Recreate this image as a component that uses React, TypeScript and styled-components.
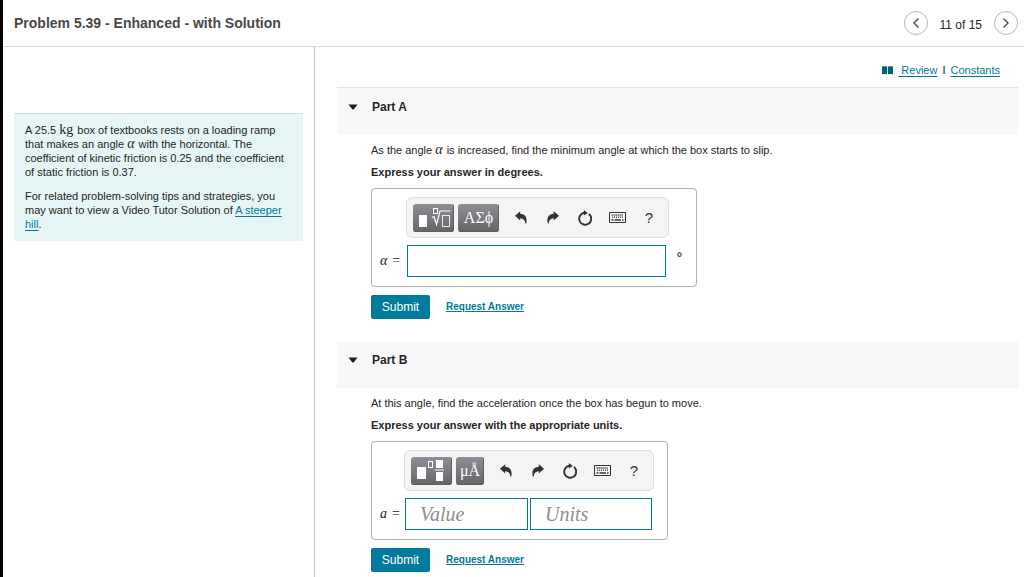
import React from "react";
import styled, { createGlobalStyle } from "styled-components";

const sans = '"Liberation Sans", Arial, Helvetica, sans-serif';
const serif = '"Liberation Serif", "Times New Roman", serif';
const teal = "#007b9c";

const GlobalStyle = createGlobalStyle`
  *, *::before, *::after { box-sizing: border-box; }
  body { margin: 0; background: #fff; color: #252525; font: 11px/14px ${sans}; }
  p, h1, h2 { margin: 0; }
  button, input { font: inherit; color: inherit; padding: 0; margin: 0; }
  button { cursor: pointer; }
  svg { display: block; }
`;

const Page = styled.div`
  min-height: 100vh;
  display: flex;
  flex-direction: column;
  border-left: 3px solid #000;
`;

const Header = styled.header`
  display: flex;
  align-items: center;
  justify-content: space-between;
  height: 47px;
  padding: 0 6px 0 11px;
  border-bottom: 1px solid #dcdcdc;
`;

const Title = styled.h1`
  font-size: 14px;
  line-height: 16px;
  color: #484848;
`;

const Pager = styled.nav`
  display: flex;
  align-items: center;
  gap: 12px;
  font-size: 12px;
`;

const PagerLabel = styled.span`
  padding-top: 4px;
`;

const RoundButton = styled.button`
  display: grid;
  place-items: center;
  width: 24px;
  height: 24px;
  border: 1px solid #b8b8b8;
  border-radius: 50%;
  background: #fff;
`;

const Body = styled.div`
  flex: 1;
  display: flex;
`;

const Sidebar = styled.aside`
  flex: none;
  width: 312px;
  padding: 66px 11px 0;
  border-right: 1px solid #b9c8d6;
`;

const ProblemCard = styled.section`
  display: flex;
  flex-direction: column;
  gap: 10px;
  padding: 9px 11px 10px;
  border-top: 1px solid #d5dddd;
  background: #e6f6f6;
`;

const TextLink = styled.a`
  color: ${teal};
  text-decoration: underline;
  text-underline-offset: 2px;
  text-decoration-thickness: 1px;
`;

const RequestLink = styled(TextLink)`
  font-size: 10px;
  font-weight: bold;
  text-underline-offset: 1px;
`;

const MathText = styled.span<{ $italic?: boolean }>`
  margin-right: 1px;
  font-family: ${serif};
  font-size: 14px;
  line-height: 1px;
  font-style: ${(p) => (p.$italic ? "italic" : "normal")};
`;

const Main = styled.main`
  flex: 1;
  min-width: 0;
  padding: 0 6px 4px 22px;
`;

const Resources = styled.div`
  display: flex;
  align-items: center;
  justify-content: flex-end;
  gap: 5px;
  padding: 16px 18px 10px 0;

  a { white-space: pre; }
`;

const Parts = styled.div`
  display: flex;
  flex-direction: column;
  gap: 22px;
  border-top: 1px solid #e4e4e4;
`;

const PartHeader = styled.h2`
  display: flex;
  height: 47px;
  background: #f8f8f8;
  font-size: 12px;
`;

const PartToggle = styled.button`
  display: flex;
  align-items: center;
  gap: 14px;
  height: 38px;
  padding: 0 11px;
  border: 0;
  background: none;
  font-weight: bold;
`;

const PartBody = styled.div`
  padding: 8px 34px 0;
`;

const Prompt = styled.p<{ $strong?: boolean }>`
  line-height: 15px;
  margin-bottom: ${(p) => (p.$strong ? 8 : 7)}px;
  font-weight: ${(p) => (p.$strong ? "bold" : "normal")};
`;

const AnswerBox = styled.div<{ $label: number }>`
  display: grid;
  grid-template-columns: ${(p) => p.$label}px auto;
  row-gap: 7px;
  width: fit-content;
  padding: 8px 13px 9px 8px;
  border: 1px solid #b0b0b0;
  border-radius: 4px;
`;

const Toolbar = styled.div`
  grid-column: 2;
  justify-self: start;
  display: flex;
  align-items: center;
  gap: 6px;
  height: 41px;
  padding: 0 3px 0 6px;
  border: 1px solid #dedede;
  border-radius: 6px;
  background: #f4f4f4;
`;

const Palettes = styled.div`
  display: flex;
  gap: 4px;
`;

const Tools = styled.div`
  display: flex;
`;

const PaletteButton = styled.button<{ $width: number }>`
  display: grid;
  place-items: center;
  width: ${(p) => p.$width}px;
  height: 28px;
  border: 0;
  border-radius: 3px;
  background: linear-gradient(#8f8e96, #656568);
  box-shadow: inset -1px -1px 0 #5e5e60;
  color: #fff;
  font: 16px/20px ${serif};
`;

const ToolButton = styled.button`
  display: grid;
  place-items: center;
  width: 32px;
  height: 28px;
  border: 0;
  background: none;
  font-size: 15px;
  color: #333;
`;

const AnswerLabel = styled.label`
  align-self: center;
  display: flex;
  align-items: center;
  gap: 5px;
  font: 14px/16px ${serif};
`;

const FieldRow = styled.div`
  display: flex;
  gap: 2px;
  padding-left: 1px;
`;

const Field = styled.input<{ $width: number }>`
  width: ${(p) => p.$width}px;
  height: 32px;
  padding: 0 14px;
  border: 1px solid ${teal};
  border-radius: 0;
  background: #fff;
  font: italic 20px/24px ${serif};

  &::placeholder { color: #8e8e8e; opacity: 1; }
`;

const UnitMark = styled.span`
  width: 15px;
  padding-left: 7px;
  font: 14px/18px "DejaVu Sans", sans-serif;
`;

const Actions = styled.div`
  display: flex;
  align-items: center;
  gap: 16px;
  margin-top: 8px;
`;

const SubmitButton = styled.button`
  width: 59px;
  height: 24px;
  border: 0;
  border-radius: 2px;
  background: ${teal};
  color: #fff;
  font-size: 12px;
`;

const Chevron = ({ right }: { right?: boolean }) => (
  <svg width="8" height="12" viewBox="0 0 8 12" fill="none" stroke="#4a4a4a" strokeWidth="1.4" aria-hidden="true">
    <path d={right ? "M1.5 1.5 6 6 1.5 10.5" : "M6.5 1.5 2 6l4.5 4.5"} />
  </svg>
);

const BookIcon = () => (
  <svg width="11" height="9" viewBox="0 0 11 9" fill="#006377" aria-hidden="true">
    <path d="M0 .5Q3-.1 5.100.6V8.300Q3 7.600 0 8.200ZM5.900.6Q8-.1 11 .5V8.200Q8 7.600 5.900 8.300Z" />
  </svg>
);

const CaretIcon = () => (
  <svg width="10" height="6" viewBox="0 0 10 6" fill="#1e1e1e" aria-hidden="true">
    <path d="M.5.5h9L6 5Q5 6 4 5Z" />
  </svg>
);

const ArrowIcon = ({ flip }: { flip?: boolean }) => (
  <svg width="12" height="13" viewBox="0 0 12 13" fill="#333" aria-hidden="true">
    <path
      transform={flip ? "translate(12 0) scale(-1 1)" : undefined}
      d="M0 4.7 5.200.2v2.600C9.600 2.900 12.700 6 11.200 12.600h-.9C10.100 9.100 8.500 7.300 5.200 7.200v2.400Z"
    />
  </svg>
);

const ResetIcon = () => (
  <svg width="14" height="16" viewBox="0 0 14 16" aria-hidden="true">
    <path d="M10.900 4A6 6 0 1 1 6.400 2.800" fill="none" stroke="#333" strokeWidth="1.900" />
    <path d="M5.800 0 9.800 2.900 5.800 5.600Z" fill="#333" />
  </svg>
);

const KeyboardIcon = () => (
  <svg width="17" height="11" viewBox="0 0 17 11" fill="none" stroke="#333" aria-hidden="true">
    <rect x=".5" y=".5" width="16" height="10" rx=".8" strokeWidth="1.100" fill="#fff" />
    <path d="M2.500 3h12M3 5.200h11" strokeWidth="1.300" strokeDasharray="1.200 .8" />
    <path d="M2.500 8h2M5.500 8h6.500M13 8h1.500" strokeWidth="1.400" />
  </svg>
);

const RootTemplateIcon = () => (
  <svg width="34" height="22" viewBox="0 0 34 22" fill="none" stroke="#fff" aria-hidden="true">
    <rect x="2" y="8" width="8" height="12" fill="#fff" stroke="none" />
    <rect x="16.500" y="1.500" width="4" height="5" />
    <path d="M15 10.500l2-1 2.500 8 3.500-13.500H33.500" strokeWidth="1.200" />
    <rect x="25.500" y="8.500" width="7" height="11" strokeOpacity=".85" />
  </svg>
);

const FractionTemplateIcon = () => (
  <svg width="30" height="24" viewBox="0 0 30 24" fill="#fff" aria-hidden="true">
    <rect x="0" y="8" width="9" height="12" />
    <rect x="11.500" y="2.500" width="4" height="6" fill="none" stroke="#fff" />
    <rect x="19" y="1" width="7" height="8" />
    <path d="M18 10.500h9v1h-9z" />
    <rect x="19" y="13" width="7" height="9" />
  </svg>
);

function EditTools() {
  return (
    <Tools>
      <ToolButton type="button" aria-label="Undo"><ArrowIcon /></ToolButton>
      <ToolButton type="button" aria-label="Redo"><ArrowIcon flip /></ToolButton>
      <ToolButton type="button" aria-label="Reset"><ResetIcon /></ToolButton>
      <ToolButton type="button" aria-label="Keyboard shortcuts"><KeyboardIcon /></ToolButton>
      <ToolButton type="button" aria-label="Help">?</ToolButton>
    </Tools>
  );
}

function Part({ name, children }: { name: string; children: React.ReactNode }) {
  return (
    <section>
      <PartHeader>
        <PartToggle type="button" aria-expanded="true"><CaretIcon />{name}</PartToggle>
      </PartHeader>
      <PartBody>
        {children}
        <Actions>
          <SubmitButton type="submit">Submit</SubmitButton>
          <RequestLink href="#answer">Request Answer</RequestLink>
        </Actions>
      </PartBody>
    </section>
  );
}

export default function App() {
  return (
    <Page>
      <GlobalStyle />
      <Header>
        <Title>Problem 5.39 - Enhanced - with Solution</Title>
        <Pager aria-label="Problems">
          <RoundButton type="button" aria-label="Previous"><Chevron /></RoundButton>
          <PagerLabel>11 of 15</PagerLabel>
          <RoundButton type="button" aria-label="Next"><Chevron right /></RoundButton>
        </Pager>
      </Header>
      <Body>
        <Sidebar>
          <ProblemCard>
            <p>
              A 25.5 <MathText>kg</MathText> box of textbooks rests on a loading ramp that makes an angle{" "}
              <MathText $italic>α</MathText> with the horizontal. The coefficient of kinetic friction is 0.25 and
              the coefficient of static friction is 0.37.
            </p>
            <p>
              For related problem-solving tips and strategies, you may want to view a Video Tutor Solution of{" "}
              <TextLink href="#hill">A steeper hill</TextLink>.
            </p>
          </ProblemCard>
        </Sidebar>
        <Main>
          <Resources>
            <BookIcon />
            <TextLink href="#review">{" Review"}</TextLink>
            <span>I</span>
            <TextLink href="#constants">Constants</TextLink>
          </Resources>
          <Parts>
            <Part name="Part A">
              <Prompt>
                As the angle <MathText $italic>α</MathText> is increased, find the minimum angle at which the box
                starts to slip.
              </Prompt>
              <Prompt $strong>Express your answer in degrees.</Prompt>
              <AnswerBox $label={26}>
                <Toolbar>
                  <Palettes>
                    <PaletteButton type="button" $width={41} aria-label="Templates"><RootTemplateIcon /></PaletteButton>
                    <PaletteButton type="button" $width={41}>ΑΣϕ</PaletteButton>
                  </Palettes>
                  <EditTools />
                </Toolbar>
                <AnswerLabel htmlFor="angle"><i>α</i><span>=</span></AnswerLabel>
                <FieldRow>
                  <Field id="angle" type="text" $width={259} />
                  <UnitMark>∘</UnitMark>
                </FieldRow>
              </AnswerBox>
            </Part>
            <Part name="Part B">
              <Prompt>At this angle, find the acceleration once the box has begun to move.</Prompt>
              <Prompt $strong>Express your answer with the appropriate units.</Prompt>
              <AnswerBox $label={24}>
                <Toolbar>
                  <Palettes>
                    <PaletteButton type="button" $width={41} aria-label="Templates"><FractionTemplateIcon /></PaletteButton>
                    <PaletteButton type="button" $width={28}>μÅ</PaletteButton>
                  </Palettes>
                  <EditTools />
                </Toolbar>
                <AnswerLabel htmlFor="value"><i>a</i><span>=</span></AnswerLabel>
                <FieldRow>
                  <Field id="value" type="text" placeholder="Value" $width={123} />
                  <Field type="text" placeholder="Units" aria-label="Units" $width={122} />
                </FieldRow>
              </AnswerBox>
            </Part>
          </Parts>
        </Main>
      </Body>
    </Page>
  );
}
